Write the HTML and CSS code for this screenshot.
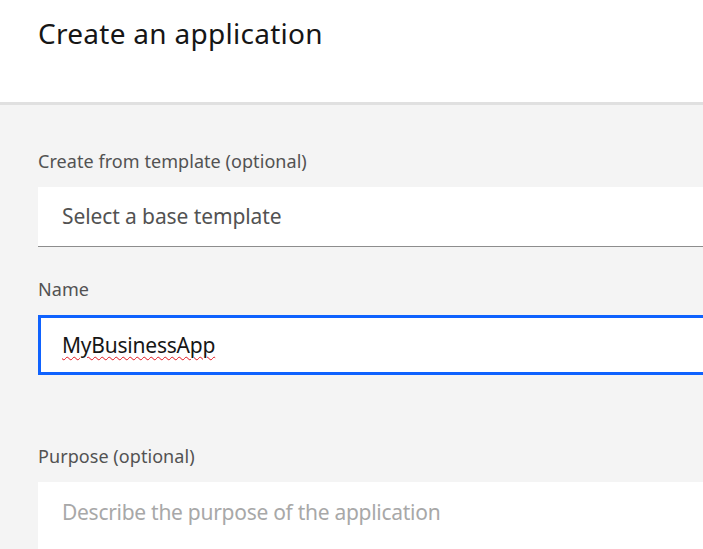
FILE: index.html
```html
<!DOCTYPE html>
<html lang="en">
<head>
<meta charset="utf-8">
<title>Create an application</title>
<link rel="stylesheet" href="styles.css">
</head>
<body>
<header class="page-header">
  <h1 class="page-title">Create an application</h1>
</header>
<main class="form-area">
  <div class="field field-template">
    <label class="field-label">Create from template (optional)</label>
    <div class="select-box">Select a base template</div>
  </div>
  <div class="field field-name">
    <label class="field-label">Name</label>
    <div class="text-input"><span class="misspelled">MyBusinessApp</span></div>
  </div>
  <div class="field field-purpose">
    <label class="field-label">Purpose (optional)</label>
    <div class="text-area">Describe the purpose of the application</div>
  </div>
</main>
</body>
</html>
```

FILE: styles.css
```css
html, body {
  margin: 0;
  padding: 0;
  height: 100%;
  overflow: hidden;
}
body {
  font-family: "Noto Sans", "Open Sans", sans-serif;
  background: #f4f4f4;
  color: #161616;
}
.page-header {
  background: #ffffff;
  padding: 15px 0 0 38px;
  height: 87px;
  border-bottom: 3px solid #e0e0e0;
}
.page-title {
  margin: 0;
  font-size: 28px;
  line-height: 36px;
  font-weight: 400;
  letter-spacing: 0.28px;
  color: #161616;
}
.form-area {
  padding: 44px 0 0 38px;
  display: flex;
  flex-direction: column;
}
.field {
  display: flex;
  flex-direction: column;
}
.field-label {
  font-size: 18px;
  line-height: 24px;
  letter-spacing: 0.06px;
  color: #525252;
  margin-bottom: 14px;
}
.field-name { margin-top: 30px; }
.field-purpose { margin-top: 69px; }
.select-box {
  background: #ffffff;
  height: 59px;
  border-bottom: 1px solid #8d8d8d;
  padding-left: 24px;
  font-size: 21px;
  line-height: 59px;
  letter-spacing: -0.1px;
  color: #525252;
}
.text-input {
  background: #ffffff;
  height: 54px;
  border: 3px solid #0f62fe;
  border-right: none;
  padding-left: 21px;
  font-size: 21px;
  line-height: 54px;
  letter-spacing: -0.22px;
  color: #161616;
}
.misspelled {
  text-decoration: underline wavy #e0161e;
  text-decoration-thickness: 1px;
  text-underline-offset: 3px;
}
.text-area {
  background: #ffffff;
  height: 51px;
  padding: 16px 0 0 24px;
  font-size: 21px;
  line-height: 28px;
  letter-spacing: -0.28px;
  color: #a8a8a8;
}
```
